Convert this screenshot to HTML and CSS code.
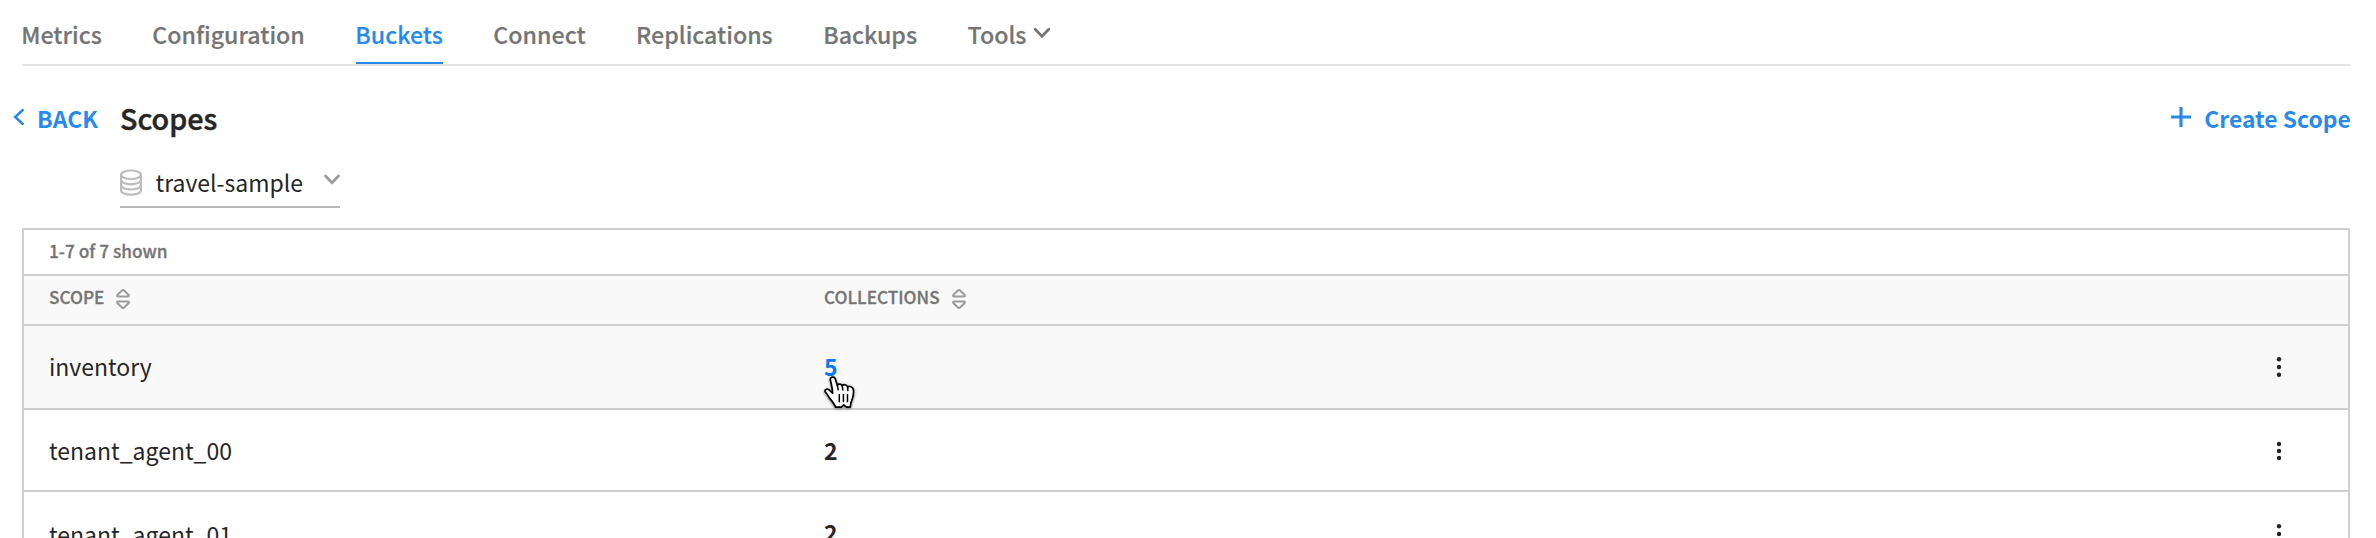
FILE: index.html
```html
<!DOCTYPE html>
<html lang="en">
<head>
<meta charset="utf-8">
<title>Scopes</title>
<link rel="stylesheet" href="styles.css">
</head>
<body>
<nav class="tabs">
  <a class="tab">Metrics</a>
  <a class="tab">Configuration</a>
  <a class="tab tab-active">Buckets</a>
  <a class="tab">Connect</a>
  <a class="tab">Replications</a>
  <a class="tab">Backups</a>
  <a class="tab tab-menu">Tools
    <svg class="tab-chevron" width="18" height="12" viewBox="0 0 18 12"><path d="M2.2 2.2 9 9.2l6.8-7" fill="none" stroke="currentColor" stroke-width="2.7" stroke-linecap="round"/></svg>
  </a>
</nav>

<header class="heading">
  <a class="back">
    <svg class="back-chevron" width="12" height="18" viewBox="0 0 12 18"><path d="M9.8 2 2.2 9l7.6 7" fill="none" stroke="currentColor" stroke-width="2.5" stroke-linecap="round"/></svg>
    <span>BACK</span>
  </a>
  <h1 class="title">Scopes</h1>
  <a class="create">
    <svg class="plus" width="20" height="20" viewBox="0 0 20 20"><path d="M10 0v20M0 10h20" fill="none" stroke="currentColor" stroke-width="3.2"/></svg>
    <span>Create Scope</span>
  </a>
</header>

<div class="bucket-select">
  <svg class="db" width="22" height="27" viewBox="0 0 22 27" fill="none" stroke="#bdbdbd" stroke-width="2.2">
    <ellipse cx="11" cy="5.8" rx="9.9" ry="4.3"/>
    <path d="M1.1 5.8v15.6c0 2.4 4.5 4.3 9.9 4.3s9.900-1.900 9.900-4.3V5.800"/>
    <path d="M1.1 11c0 2.4 4.5 4.3 9.900 4.3s9.900-1.900 9.900-4.3M1.1 16.200c0 2.400 4.500 4.300 9.900 4.300s9.900-1.900 9.900-4.300"/>
  </svg>
  <span class="bucket-name">travel-sample</span>
  <svg class="select-chevron" width="16" height="12" viewBox="0 0 16 12"><path d="M1.5 2 8 8.8 14.5 2" fill="none" stroke="#9b9b9b" stroke-width="2.7" stroke-linecap="round"/></svg>
</div>

<section class="table">
  <div class="summary">1-7 of 7 shown</div>
  <div class="row head">
    <div class="cell">SCOPE
      <svg class="sort" width="14" height="20" viewBox="0 0 14 20" fill="none" stroke="#9b9b9b" stroke-width="2" stroke-linejoin="round"><path d="M6.2 1.3Q7 .7 7.8 1.3L12.7 6Q13.3 7.6 12 7.6H2Q.7 7.6 1.3 6ZM6.2 18.7Q7 19.3 7.8 18.7L12.7 14Q13.3 12.4 12 12.4H2Q.7 12.4 1.3 14Z"/></svg>
    </div>
    <div class="cell">COLLECTIONS
      <svg class="sort" width="14" height="20" viewBox="0 0 14 20" fill="none" stroke="#9b9b9b" stroke-width="2" stroke-linejoin="round"><path d="M6.2 1.3Q7 .7 7.8 1.3L12.7 6Q13.3 7.6 12 7.6H2Q.7 7.6 1.3 6ZM6.2 18.7Q7 19.3 7.8 18.7L12.7 14Q13.3 12.4 12 12.4H2Q.7 12.4 1.3 14Z"/></svg>
    </div>
  </div>
  <div class="row hovered">
    <div class="cell">inventory</div>
    <div class="cell count link">5
      <svg class="pointer" width="36" height="38" viewBox="0 0 36 38">
        <path d="M6.3 3.8C5.8 1 10.2-.1 11.2 2.8L13.3 9.2C14.5 7.7 17.2 7.7 18.2 9.6C20 8 22.8 8.5 23.6 11C25.5 9.9 28.7 10.6 29.3 13.3C30 17 29.3 20 28.2 23C27 26 26.4 28 26.2 31.2H22.6L19.7 28.9L17.4 31.2H11.6C10.3 28 7.6 24.5 5.2 21.6C4 19.5 3 17.8 1.4 16.2C-.1 14 2.6 12.4 4.8 13.7L8.6 17.2C8.7 12.5 7.3 8.5 6.3 3.8Z" fill="#fff" stroke="#000" stroke-width="1.7" stroke-linejoin="round"/>
        <path d="M13.3 9.2l.9 4.6M18.2 9.6l.6 4.4M23.6 11l.3 3.6" fill="none" stroke="#000" stroke-width="1.5" stroke-linecap="round"/>
        <path d="M15.3 18v8.2M19.4 18v8.2M23.5 18v8.2" fill="none" stroke="#000" stroke-width="1.5"/>
      </svg>
    </div>
    <svg class="dots" width="6" height="22" viewBox="0 0 6 22" fill="#222"><circle cx="3" cy="3.3" r="2.2"/><circle cx="3" cy="11" r="2.2"/><circle cx="3" cy="18.7" r="2.2"/></svg>
  </div>
  <div class="row">
    <div class="cell">tenant_agent_00</div>
    <div class="cell count">2</div>
    <svg class="dots" width="6" height="22" viewBox="0 0 6 22" fill="#222"><circle cx="3" cy="4" r="2.2"/><circle cx="3" cy="11" r="2.2"/><circle cx="3" cy="18" r="2.2"/></svg>
  </div>
  <div class="row">
    <div class="cell cell-low">tenant_agent_01</div>
    <div class="cell count">2</div>
    <svg class="dots" width="6" height="22" viewBox="0 0 6 22" fill="#222"><circle cx="3" cy="4.3" r="2.2"/><circle cx="3" cy="12" r="2.2"/><circle cx="3" cy="19.7" r="2.2"/></svg>
  </div>
</section>
</body>
</html>
```

FILE: styles.css
```css
* {
  box-sizing: border-box;
}

html,
body {
  height: 538px;
  overflow: hidden;
}

body {
  margin: 0;
  padding: 0 26px 0 22px;
  background: #fff;
  color: #262626;
  font-family: "Noto Sans CJK SC", "Open Sans", sans-serif;
  font-size: 23px;
}

svg {
  display: block;
  flex: none;
}

/* Tabs */
.tabs {
  display: flex;
  gap: 50.5px;
  height: 66px;
  padding-top: 4px;
  border-bottom: 2px solid #e4e4e4;
  color: #757575;
  font-size: 23.2px;
  font-weight: 500;
  line-height: 60px;
  -webkit-text-stroke: 0.2px currentColor;
}

.tab {
  position: relative;
  display: flex;
  white-space: nowrap;
}

.tab:first-child {
  margin-left: -0.8px;
}

.tab-active {
  color: #288aea;
}

.tab-active::after {
  content: "";
  position: absolute;
  left: 1px;
  right: 0;
  bottom: 0;
  height: 2px;
  background: #288aea;
}

.tab-chevron {
  margin: 23px 0 0 6.5px;
}

/* Heading */
.heading {
  display: flex;
  height: 40px;
  margin-top: 32px;
  line-height: 40px;
}

.back,
.create {
  display: flex;
  color: #288aea;
  font-weight: 700;
}

.back {
  width: 98px;
  margin-left: -9px;
}

.back-chevron {
  margin: 10px 12px 0 0;
}

.title {
  margin: 0 0 0 9px;
  font-size: 28.7px;
  font-weight: 500;
  line-height: 39px;
  -webkit-text-stroke: 0.5px currentColor;
}

.create {
  margin: 0 -0.8px 0 auto;
  font-size: 22.9px;
}

.plus {
  margin: 9px 13px 0 0;
}

/* Bucket picker */
.bucket-select {
  display: flex;
  width: 220px;
  height: 50px;
  margin: 20px 0 20px 98px;
  border-bottom: 2px solid #b9b9b9;
  line-height: 48px;
}

.db {
  margin: 11px 13.5px 0 0;
}

.select-chevron {
  margin: 16px 0 0 auto;
}

/* Table */
.table {
  height: 310px;
  overflow: hidden;
  border: 2px solid #cfcfcf;
  border-bottom: 0;
}

.summary {
  height: 44px;
  padding-left: 25px;
  color: #757575;
  font-size: 17.3px;
  font-weight: 500;
  line-height: 41px;
  -webkit-text-stroke: 0.3px currentColor;
}

.row {
  display: grid;
  grid-template-columns: 775px 1fr 48px;
  height: 82px;
  padding: 0 24px 0 25px;
  border-top: 2px solid #cfcfcf;
  line-height: 80px;
}

.row.head {
  height: 50px;
  background: #f9f9f9;
  color: #757575;
  font-size: 17.2px;
  font-weight: 500;
  line-height: 41px;
  -webkit-text-stroke: 0.3px currentColor;
}

.row.hovered {
  height: 84px;
  background: #f9f9f9;
}

.cell {
  display: flex;
}

.cell-low {
  padding-top: 2px;
}

.sort {
  margin: 13px 0 0 12px;
}

.count {
  position: relative;
  font-weight: 700;
}

.link {
  color: #0a78ee;
}

.pointer {
  position: absolute;
  left: 0;
  top: 50px;
  filter: drop-shadow(0 1.5px 1.5px rgba(0, 0, 0, 0.45));
}

.dots {
  margin: 30px 0 0;
}
```
